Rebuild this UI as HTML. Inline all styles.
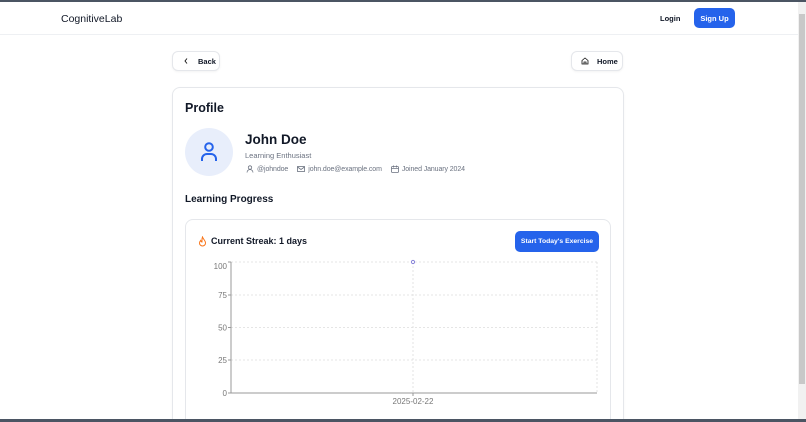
<!DOCTYPE html>
<html style="width:806px;height:422px;overflow:hidden"><head><style>
*{margin:0;padding:0;box-sizing:border-box}
body{width:806px;height:422px;overflow:hidden;background:#fff;font-family:"Liberation Sans",sans-serif;color:#111827;position:relative}
.a{position:absolute}
.btn{border:1px solid #e5e7eb;border-radius:6px;background:#fff;font-size:7.5px;font-weight:bold;display:flex;align-items:center;box-shadow:0 1px 2px rgba(0,0,0,.05)}
.meta{font-size:7px;color:#6b7280;display:flex;align-items:center;gap:3px;letter-spacing:-.1px}
</style></head><body>
<div class="a" style="left:0;top:2px;width:798px;height:33px;border-bottom:1px solid #eef0f3"></div>
<div class="a" style="left:61px;top:13px;font-size:10.5px;font-weight:500">CognitiveLab</div>
<div class="a" style="left:660px;top:14px;font-size:7.5px;font-weight:bold">Login</div>
<div class="a" style="left:694px;top:8px;width:41px;height:20px;background:#2563eb;border-radius:5px;color:#fff;font-size:7.5px;font-weight:bold;display:flex;align-items:center;justify-content:center">Sign Up</div>

<div class="a btn" style="left:172px;top:51px;width:48px;height:20px;padding-left:10px;gap:9px"><svg width="6" height="8" viewBox="0 0 6 8"><path d="M4 1.5L2 4 4 6.5" fill="none" stroke="#111" stroke-width=".9"/></svg>Back</div>
<div class="a btn" style="left:571px;top:51px;width:52px;height:20px;padding-left:9px;gap:8px"><svg width="8" height="8" viewBox="0 0 8 8"><path d="M1 3.5L4 1 7 3.5V7H1Z M3 7V5h2v2" fill="none" stroke="#111" stroke-width=".8"/></svg>Home</div>

<div class="a" style="left:172px;top:87px;width:452px;height:345px;border:1px solid #e5e7eb;border-radius:8px;box-shadow:0 1px 2px rgba(0,0,0,.04)"></div>
<div class="a" style="left:185px;top:101px;font-size:12.5px;font-weight:bold">Profile</div>
<div class="a" style="left:185px;top:128px;width:48px;height:48px;border-radius:50%;background:#e8eefb"></div>
<svg class="a" style="left:200px;top:142px" width="18" height="20" viewBox="0 0 18 20"><circle cx="9" cy="5" r="3.8" fill="none" stroke="#2563eb" stroke-width="2"/><path d="M2 19v-2a5 5 0 0 1 5-5h4a5 5 0 0 1 5 5v2" fill="none" stroke="#2563eb" stroke-width="2"/></svg>
<div class="a" style="left:245px;top:132px;font-size:13.5px;font-weight:bold">John Doe</div>
<div class="a" style="left:245px;top:151px;font-size:7.5px;color:#6b7280">Learning Enthusiast</div>
<div class="a meta" style="left:246px;top:165px">
<svg width="8" height="8" viewBox="0 0 8 8"><circle cx="4" cy="2.5" r="1.7" fill="none" stroke="#6b7280" stroke-width=".8"/><path d="M1 7.5a3 3 0 0 1 6 0" fill="none" stroke="#6b7280" stroke-width=".8"/></svg><span>@johndoe</span>
<span style="width:3px"></span><svg width="8" height="8" viewBox="0 0 8 8"><rect x=".5" y="1.5" width="7" height="5" fill="none" stroke="#6b7280" stroke-width=".8"/><path d="M.5 2l3.5 2.5L7.5 2" fill="none" stroke="#6b7280" stroke-width=".8"/></svg><span>john.doe@example.com</span>
<span style="width:3px"></span><svg width="8" height="8" viewBox="0 0 8 8"><rect x=".5" y="1.5" width="7" height="6" rx="1" fill="none" stroke="#6b7280" stroke-width=".8"/><path d="M.5 3.5h7M2.5 .5v2M5.5 .5v2" stroke="#6b7280" stroke-width=".8"/></svg><span>Joined January 2024</span></div>
<div class="a" style="left:185px;top:194px;font-size:10px;font-weight:bold">Learning Progress</div>

<div class="a" style="left:185px;top:219px;width:426px;height:220px;border:1px solid #e5e7eb;border-radius:8px"></div>
<svg class="a" style="left:198px;top:236px" width="9" height="11" viewBox="0 0 9 11"><path d="M4.5 1C5 3 7.5 4.5 7.5 7a3 3 0 0 1-6 0c0-1.3.7-2 1.2-2.6C3 5.5 3.5 6 4 6c0-2-.2-3.5.5-5z" fill="none" stroke="#f97316" stroke-width="1"/></svg>
<div class="a" style="left:211px;top:236px;font-size:9px;font-weight:bold">Current Streak: 1 days</div>
<div class="a" style="left:515px;top:231px;width:84px;height:21px;background:#2563eb;border-radius:5px;color:#fff;font-size:6.8px;font-weight:bold;display:flex;align-items:center;justify-content:center">Start Today's Exercise</div>

<svg class="a" style="left:200px;top:255px" width="410" height="160" viewBox="200 255 410 160" font-family="Liberation Sans" font-size="8" fill="#777">
<g stroke="#ddd" stroke-dasharray="2 2" stroke-width=".8">
<line x1="231" y1="262" x2="597" y2="262"/><line x1="231" y1="295" x2="597" y2="295"/><line x1="231" y1="327.5" x2="597" y2="327.5"/><line x1="231" y1="360" x2="597" y2="360"/>
<line x1="413" y1="262" x2="413" y2="393"/><line x1="597" y1="262" x2="597" y2="393"/></g>
<path d="M231 262V393H597" fill="none" stroke="#999" stroke-width="1"/>
<g stroke="#999"><line x1="228" y1="262" x2="231" y2="262"/><line x1="228" y1="295" x2="231" y2="295"/><line x1="228" y1="327.5" x2="231" y2="327.5"/><line x1="228" y1="360" x2="231" y2="360"/><line x1="228" y1="393" x2="231" y2="393"/><line x1="413" y1="393" x2="413" y2="396"/></g>
<g text-anchor="end"><text x="227" y="269">100</text><text x="227" y="298">75</text><text x="227" y="330.5">50</text><text x="227" y="363">25</text><text x="227" y="396">0</text></g>
<text x="413" y="404" text-anchor="middle">2025-02-22</text>
<circle cx="413" cy="262" r="1.6" fill="#fff" stroke="#8884d8" stroke-width="1"/>
</svg>
<div class="a" style="left:0;top:419px;width:806px;height:3px;background:#4b5563"></div>
<div class="a" style="left:0;top:0;width:806px;height:2px;background:#4b5563"></div>
<div class="a" style="left:798px;top:2px;width:8px;height:417px;background:#f1f1f1"></div>
<div class="a" style="left:799px;top:14px;width:6px;height:370px;background:#c8c8c8"></div>
</body></html>
